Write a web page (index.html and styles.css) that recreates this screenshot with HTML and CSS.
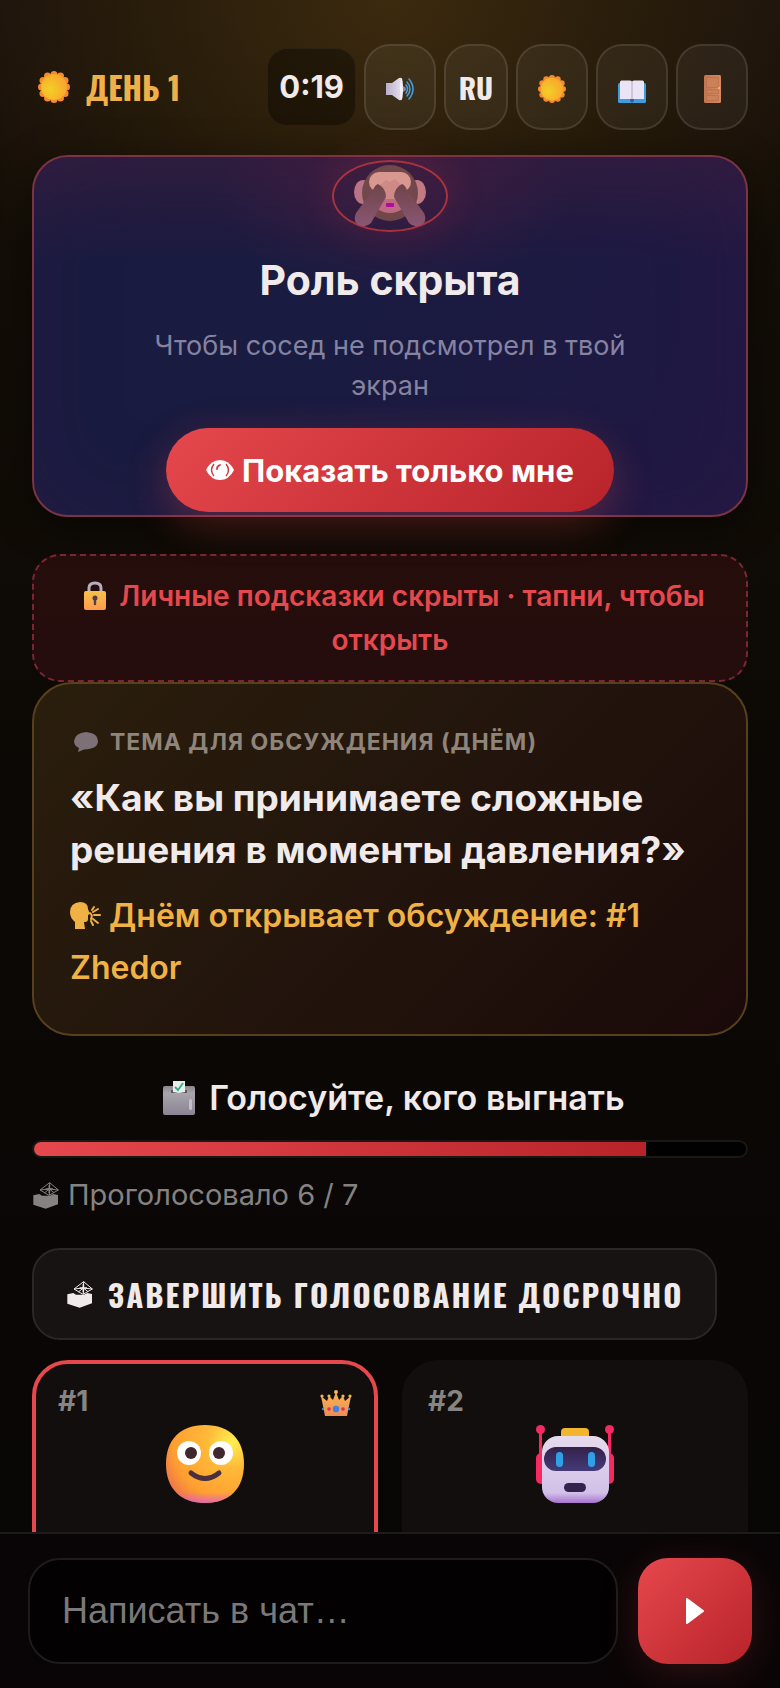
FILE: index.html
```html
<!DOCTYPE html>
<html lang="ru">
<head>
<meta charset="utf-8">
<meta name="viewport" content="width=device-width, initial-scale=1">
<title>День 1</title>
<link rel="stylesheet" href="styles.css">
</head>
<body>
<svg class="defs" aria-hidden="true">
  <defs>
    <radialGradient id="sunCore" cx="35%" cy="60%" r="70%"><stop offset="0" stop-color="#f3d027"/><stop offset="1" stop-color="#f9a32c"/></radialGradient>
    <linearGradient id="speaker" x1="0" x2="1"><stop offset="0" stop-color="#b9aec9"/><stop offset="1" stop-color="#e8e2ee"/></linearGradient>
    <linearGradient id="arm" gradientUnits="userSpaceOnUse" x1="0" y1="20" x2="0" y2="62"><stop offset="0" stop-color="#6f4548"/><stop offset="1" stop-color="#8a5674"/></linearGradient>
    <radialGradient id="furHead" cx="50%" cy="45%" r="55%"><stop offset="0" stop-color="#7a4555"/><stop offset="1" stop-color="#704848"/></radialGradient>
    <linearGradient id="lockBody" x1="0" y1="0" x2="0" y2="1"><stop offset="0" stop-color="#f5c24a"/><stop offset="1" stop-color="#ff9a4e"/></linearGradient>
    <linearGradient id="box" x1="0" y1="0" x2="0" y2="1"><stop offset="0" stop-color="#8a8889"/><stop offset=".25" stop-color="#a9a5ad"/><stop offset="1" stop-color="#8a8494"/></linearGradient>
    <radialGradient id="face" cx="85%" cy="22%" r="95%"><stop offset="0" stop-color="#fff050"/><stop offset=".35" stop-color="#ffb938"/><stop offset=".8" stop-color="#ff9f30"/><stop offset="1" stop-color="#f07a48"/></radialGradient>
    <linearGradient id="faceLow" x1="0" y1="0" x2="0" y2="1"><stop offset=".86" stop-color="#e060c0" stop-opacity="0"/><stop offset="1" stop-color="#e060d0" stop-opacity=".8"/></linearGradient>
    <linearGradient id="robot" x1="0" y1="0" x2="0" y2="1"><stop offset="0" stop-color="#e6dcec"/><stop offset=".85" stop-color="#d2c0e8"/><stop offset="1" stop-color="#a774cf"/></linearGradient>
    <linearGradient id="visor" x1="0" y1="0" x2="0" y2="1"><stop offset="0" stop-color="#33224a"/><stop offset="1" stop-color="#443a78"/></linearGradient>
    <linearGradient id="door" x1="0" x2="1"><stop offset="0" stop-color="#c2764f"/><stop offset="1" stop-color="#d58a61"/></linearGradient>
    <linearGradient id="crown" x1="0" y1="0" x2="0" y2="1"><stop offset="0" stop-color="#f7b552"/><stop offset="1" stop-color="#ee8d55"/></linearGradient>
    <symbol id="sun" viewBox="0 0 32 32">
      <g fill="#f58b2e"><circle cx="16" cy="3.500" r="3.500"/><circle cx="22.500" cy="5" r="3.500"/><circle cx="27" cy="9.500" r="3.500"/><circle cx="28.500" cy="16" r="3.500"/><circle cx="27" cy="22.500" r="3.500"/><circle cx="22.500" cy="27" r="3.500"/><circle cx="16" cy="28.500" r="3.500"/><circle cx="9.500" cy="27" r="3.500"/><circle cx="5" cy="22.500" r="3.500"/><circle cx="3.500" cy="16" r="3.500"/><circle cx="5" cy="9.500" r="3.500"/><circle cx="9.500" cy="5" r="3.500"/></g>
      <circle cx="16" cy="16" r="13" fill="url(#sunCore)"/>
    </symbol>
    <symbol id="ballot" viewBox="40 8 82 84">
      <path fill="currentColor" d="M43 51l18-4 8 5 24 0 10-5 14 3v28L80 91 43 79z"/>
      <path fill="none" stroke="currentColor" stroke-width="3" stroke-linejoin="round" d="M63 35L92 13l26 22-28 16zM63 35l28-3 27 3M92 13l-1 38M76 44l15-12 14 11"/>
      <path stroke="currentColor" stroke-width="5" d="M91 21v24M80 32h22"/>
    </symbol>
  </defs>
</svg>

<main class="game">
  <header class="topbar">
    <h1 class="phase"><svg class="phase-icon" aria-hidden="true"><use href="#sun"/></svg>ДЕНЬ 1</h1>
    <div class="tools">
      <span class="timer">0:19</span>
      <button class="tool" aria-label="Звук"><svg viewBox="0 0 28 28" aria-hidden="true"><path fill="url(#speaker)" d="M0 8h6l7-5q3-1 3 2v18q0 3-3 2l-7-5H0z"/><ellipse cx="15.500" cy="14" rx="1.500" ry="11" fill="#f5f0f7"/><path fill="#8f86a6" d="M17 11q3 1 3 3t-3 3z"/><path fill="none" stroke="#469bd6" stroke-width="1.600" stroke-linecap="round" d="M20 10q3 4 0 8M21 7q6 7 0 14M23 4q8 10 0 20"/></svg></button>
      <button class="tool tool-lang">RU</button>
      <button class="tool" aria-label="Тема"><svg aria-hidden="true"><use href="#sun"/></svg></button>
      <button class="tool" aria-label="Правила"><svg viewBox="0 0 28 28" aria-hidden="true"><rect x="0" y="8" width="28" height="20" rx="1.500" fill="#3f9ee0"/><path fill="#ebe4f5" d="M2 7q0-1.500 1.500-1.500H12q2 0 2 1.500 0-1.500 2-1.500h8.500Q26 5.500 26 7v17H15.500l-1.500 1-1.500-1H2z"/><path stroke="#b7a6c8" d="M14 7v17"/><path fill="#3c5e94" d="M12 24h4v2l-2 2-2-2z"/></svg></button>
      <button class="tool" aria-label="Выйти"><svg viewBox="0 0 28 28" aria-hidden="true"><rect x="6" width="17" height="28" rx="1.500" fill="url(#door)"/><g fill="#cb8058" stroke="#b06d48" stroke-width=".6"><path d="M8.500 2.500h12v10h-12zM8.500 15h12v3.500h-12zM8.500 20.500h12v5h-12z"/></g><circle cx="21" cy="13" r="1" fill="#ffc35b"/></svg></button>
    </div>
  </header>

  <section class="role">
    <span class="role-badge">
      <svg viewBox="0 0 72 64" aria-hidden="true">
        <ellipse cx="9" cy="28" rx="9" ry="12" fill="#b97585"/><ellipse cx="63" cy="28" rx="9" ry="12" fill="#c17a83"/>
        <ellipse cx="36" cy="29" rx="28" ry="28" fill="url(#furHead)"/>
        <ellipse cx="36" cy="35" rx="17" ry="14" fill="#bd6a82"/>
        <rect x="15" y="8" width="42" height="20" rx="10" fill="#d8988f"/>
        <path fill="#cf8a88" d="M24 23l8-7 4 2 5-3 8 8-7 12H30z"/>
        <rect x="32" y="39" width="8" height="4" rx="1" fill="#b00c9c"/>
        <g fill="url(#arm)"><path d="M24 20Q32 24 32 33L17 59Q11 65 3 60-1 56 2 49L19 26Q21 21 24 20z"/><path d="M48 20Q40 24 40 33L55 59Q61 65 69 60 73 56 70 49L53 26Q51 21 48 20z"/></g>
      </svg>
    </span>
    <h2 class="role-title">Роль скрыта</h2>
    <p class="role-text">Чтобы сосед не подсмотрел в твой экран</p>
    <button class="reveal"><svg class="reveal-icon" viewBox="0 0 28 22" aria-hidden="true"><path fill="#fff" d="M0 11Q5 1 14 1t14 10q-5 10-14 10T0 11z"/><path fill="none" stroke="#cf373c" stroke-width="1.400" d="M8 5q-5 6 0 12M20 5q5 6 0 12"/><path fill="none" stroke="#cf373c" stroke-width="1.800" stroke-linecap="round" d="M11 10q0-3 3-4"/></svg>Показать только мне</button>
  </section>

  <button class="hint"><svg class="hint-icon" viewBox="0 0 24 30" aria-hidden="true"><path fill="none" stroke="#b9adba" stroke-width="3" d="M6 12V7q0-5 6-5t6 5v5"/><rect x="1" y="10" width="22" height="19" rx="2" fill="url(#lockBody)"/><circle cx="12" cy="17" r="2.500" fill="#4e4047"/><path stroke="#4e4047" stroke-width="2.400" stroke-linecap="round" d="M12 17v6"/></svg>Личные подсказки скрыты · тапни, чтобы открыть</button>

  <section class="topic">
    <h3 class="topic-label"><svg class="topic-icon" viewBox="0 0 24 20" aria-hidden="true"><path fill="#7d7077" d="M12 0q12 1 12 9 0 8-14 8.500L4 20l1-4Q0 14 0 9 1 1 12 0z"/></svg>ТЕМА ДЛЯ ОБСУЖДЕНИЯ (ДНЁМ)</h3>
    <p class="topic-quote">«Как вы принимаете сложные решения в моменты давления?»</p>
    <p class="topic-opener"><svg class="opener-icon" viewBox="0 0 31 27" aria-hidden="true"><path fill="#f0b145" d="M10 0Q18 0 18 7l2 5-2 1v4q0 3-3 3h-1l1 7H5v-7Q0 16 0 10 0 1 10 0z"/><path fill="none" stroke="#f0b145" stroke-width="2" stroke-linecap="round" d="M20 11q3 2 1 6M23 10l5-3M24 13h6M23 17l5 4M22 8l2-3M21 19l2 4"/></svg> Днём открывает обсуждение: #1 Zhedor</p>
  </section>

  <h2 class="vote-title"><svg class="vote-icon" viewBox="0 0 32 34" aria-hidden="true"><rect y="5" width="32" height="29" rx="2" fill="url(#box)"/><path fill="#5d5a60" d="M8 9h16v3H8z"/><path fill="#e8eeee" d="M10 0h12v11l-6 1-6-1z"/><path fill="none" stroke="#2bb183" stroke-width="1.800" d="M12 6l3 3 5-7"/><rect x="26" y="18" width="3" height="11" rx="1.500" fill="#c4c0c9"/></svg>Голосуйте, кого выгнать</h2>
  <div class="progress" role="progressbar" aria-valuemin="0" aria-valuemax="7" aria-valuenow="6" aria-label="Проголосовало"><span class="progress-fill" style="width:86%"></span></div>
  <p class="voted"><svg class="ballot-icon" aria-hidden="true"><use href="#ballot"/></svg>Проголосовало 6 / 7</p>
  <button class="finish"><svg class="ballot-icon" aria-hidden="true"><use href="#ballot"/></svg>ЗАВЕРШИТЬ ГОЛОСОВАНИЕ ДОСРОЧНО</button>

  <section class="players">
    <article class="player player-me">
      <div class="player-head"><span>#1</span><svg class="crown" viewBox="0 0 32 26" aria-hidden="true"><path fill="url(#crown)" d="M1 6l6 5 2-5 4 4 3-8 3 8 4-4 2 5 6-5-4 20H5z"/><g fill="#f7b552"><circle cx="2" cy="6" r="1.600"/><circle cx="9" cy="6" r="1.600"/><circle cx="16" cy="2" r="2"/><circle cx="23" cy="6" r="1.600"/><circle cx="30" cy="6" r="1.600"/></g><circle cx="16" cy="19" r="3.200" fill="#3d82e6"/><circle cx="9" cy="19" r="1.800" fill="#e62e4c"/><circle cx="23" cy="19" r="1.800" fill="#e62e4c"/><circle cx="3" cy="19" r="1.200" fill="#3d82e6"/><circle cx="29" cy="19" r="1.200" fill="#3d82e6"/></svg></div>
      <svg class="avatar" viewBox="0 0 78 78" aria-hidden="true"><path fill="url(#face)" d="M39 0C64 0 78 15 78 39S64 78 39 78 0 63 0 39 14 0 39 0z"/><path fill="url(#faceLow)" d="M39 0C64 0 78 15 78 39S64 78 39 78 0 63 0 39 14 0 39 0z"/><circle cx="23" cy="28" r="12" fill="#fff"/><circle cx="55" cy="28" r="12" fill="#fff"/><circle cx="25" cy="28" r="6" fill="#40282f"/><circle cx="53" cy="28" r="6" fill="#40282f"/><path fill="none" stroke="#49303c" stroke-width="5" stroke-linecap="round" d="M25 48q14 11 28 0"/></svg>
    </article>
    <article class="player">
      <div class="player-head"><span>#2</span></div>
      <svg class="avatar" viewBox="0 0 78 78" aria-hidden="true"><g fill="#f52a63"><circle cx="4.500" cy="4.500" r="4.500"/><circle cx="73.500" cy="4.500" r="4.500"/><path d="M3 5h3v25H3zM72 5h3v25h-3z"/><rect y="28" width="14" height="31" rx="5"/><rect x="64" y="28" width="14" height="31" rx="5"/></g><rect x="25" y="3" width="28" height="12" rx="4" fill="#f2b52d"/><rect x="6" y="11" width="67" height="67" rx="16" fill="url(#robot)"/><rect x="8" y="22" width="62" height="24" rx="12" fill="url(#visor)"/><rect x="20" y="27" width="7" height="15" rx="3.500" fill="#2fa0e6"/><rect x="52" y="27" width="7" height="15" rx="3.500" fill="#2fa0e6"/><rect x="28" y="58" width="22" height="9" rx="4.500" fill="#33244f"/></svg>
    </article>
  </section>
</main>

<form class="chat">
  <input class="chat-input" type="text" aria-label="Сообщение" placeholder="Написать в чат…">
  <button class="chat-send" type="button" aria-label="Отправить"><svg viewBox="0 0 18 26" aria-hidden="true"><path fill="#fff" stroke="#fff" stroke-width="2" stroke-linejoin="round" d="M1 1l16 12L1 25z"/></svg></button>
</form>
</body>
</html>
```
FILE: styles.css
```css
* { box-sizing: border-box; }

body {
  margin: 0;
  height: 100vh;
  display: flex;
  flex-direction: column;
  overflow: hidden;
  color: #f0eaea;
  font-family: Inter, "Noto Sans", sans-serif;
  background:
    radial-gradient(ellipse 60% 400px at 50% 0, rgba(98, 68, 22, .5), rgba(98, 68, 22, 0)),
    radial-gradient(ellipse 160px 260px at 0 0, rgba(45, 22, 30, .2), transparent),
    radial-gradient(ellipse 160px 260px at 100% 0, rgba(45, 22, 30, .2), transparent),
    linear-gradient(#161007, #0b0805 50%, #080506);
}

h1, h2, h3, p { margin: 0; }
button { font: inherit; color: inherit; cursor: pointer; }
svg { flex: none; }
.defs { position: absolute; width: 0; height: 0; }

.game {
  flex: 1;
  min-height: 0;
  overflow: hidden;
  padding: 44px 32px 0;
}

.topbar {
  display: flex;
  align-items: center;
  justify-content: space-between;
  height: 86px;
  margin-bottom: 25px;
}
.phase {
  display: flex;
  align-items: center;
  gap: 16px;
  padding-left: 6px;
  color: #efb04a;
  font: bold 32px/40px Oswald, "Roboto Condensed", "Open Sans Condensed", Roboto, sans-serif;
}
.phase-icon { width: 32px; height: 32px; }
.tools { display: flex; align-items: center; gap: 8px; }
.timer {
  padding: 0 11px;
  border: 1px solid rgba(255, 255, 255, .05);
  border-radius: 20px;
  background: rgba(0, 0, 0, .35);
  font-size: 31px;
  font-weight: 700;
  line-height: 76px;
}
.tool {
  display: flex;
  align-items: center;
  justify-content: center;
  width: 72px;
  height: 86px;
  padding: 4px 0 0;
  border: 2px solid rgba(255, 255, 255, .1);
  border-radius: 26px;
  background: rgba(255, 255, 255, .05);
}
.tool svg { width: 28px; height: 28px; }
.tool-lang {
  width: 64px;
  padding: 0;
  font: bold 29px/40px Oswald, "Roboto Condensed", "Open Sans Condensed", Roboto, sans-serif;
}

.role {
  display: flex;
  flex-direction: column;
  align-items: center;
  height: 362px;
  padding: 3px 88px 0;
  border: 2px solid #7c3343;
  border-radius: 36px;
  text-align: center;
  background:
    radial-gradient(ellipse 180px 110px at 50% 30px, rgba(140, 35, 70, .25), transparent),
    linear-gradient(rgba(70, 32, 60, .4), transparent 30%),
    linear-gradient(110deg, #191b40 40%, #201844);
  box-shadow: inset 0 0 90px rgba(70, 28, 70, .22), 0 8px 40px rgba(0, 0, 0, .4);
}
.role-badge {
  display: flex;
  align-items: center;
  justify-content: center;
  width: 116px;
  height: 72px;
  border: 2px solid #a8333f;
  border-radius: 50%;
  box-shadow: 0 0 40px rgba(200, 50, 70, .2);
}
.role-badge svg { width: 72px; height: 64px; }
.role-title {
  margin-top: 22px;
  font-size: 41px;
  font-weight: 700;
  line-height: 52px;
}
.role-text {
  margin-top: 20px;
  color: #8583a0;
  font-size: 27px;
  line-height: 40px;
}
.reveal {
  display: flex;
  align-items: center;
  gap: 8px;
  margin-top: 22px;
  padding: 0 40px;
  height: 84px;
  border: 0;
  border-radius: 42px;
  color: #fff;
  font-size: 31px;
  font-weight: 700;
  white-space: nowrap;
  flex: none;
  background: linear-gradient(135deg, #e5484d, #b8232a);
  box-shadow: 0 12px 40px rgba(229, 72, 77, .3);
}
.reveal-icon { width: 28px; height: 22px; }

.hint {
  display: block;
  width: 100%;
  margin-top: 37px;
  padding: 18px 40px;
  border: 2px dashed #7c2635;
  border-radius: 28px;
  color: #e5484d;
  font-size: 28px;
  font-weight: 600;
  line-height: 44px;
  background: rgba(229, 50, 70, .11);
}
.hint-icon { width: 24px; height: 30px; margin: 0 12px 0 8px; vertical-align: -5px; }

.topic {
  padding: 36px 36px 40px;
  border: 2px solid #59401c;
  border-radius: 40px;
  background: linear-gradient(135deg, #2a1e0d, #21130c 60%, #1a0909);
}
.topic-label {
  display: flex;
  align-items: center;
  gap: 12px;
  padding-left: 4px;
  color: #8f857b;
  font-size: 23px;
  font-weight: 700;
  line-height: 44px;
  letter-spacing: 1px;
}
.topic-icon { width: 24px; height: 20px; }
.topic-quote {
  margin-top: 8px;
  font-size: 37px;
  font-weight: 700;
  line-height: 52px;
}
.topic-opener {
  margin-top: 14px;
  color: #f0b145;
  font-size: 32px;
  font-weight: 600;
  line-height: 52px;
}
.opener-icon { width: 31px; height: 27px; vertical-align: -2px; }

.vote-title {
  display: flex;
  align-items: center;
  justify-content: center;
  gap: 14px;
  margin-top: 38px;
  padding-left: 8px;
  font-size: 34px;
  font-weight: 600;
  line-height: 48px;
}
.vote-icon { width: 32px; height: 34px; }
.progress {
  height: 18px;
  margin-top: 18px;
  border: 2px solid #1a1717;
  border-radius: 9px;
  overflow: hidden;
  background: #020101;
}
.progress-fill {
  display: block;
  height: 100%;
  background: linear-gradient(90deg, #e5484d, #b8232a);
}
.ballot-icon { width: 28px; height: 28px; }
.voted {
  display: flex;
  align-items: center;
  gap: 8px;
  margin-top: 16px;
  color: #858282;
  font-size: 29px;
  line-height: 42px;
}
.finish {
  display: flex;
  align-items: center;
  gap: 14px;
  height: 92px;
  margin-top: 32px;
  padding: 0 32px;
  border: 2px solid #2a2727;
  border-radius: 28px;
  background: #161312;
  font: bold 31px/44px Oswald, "Roboto Condensed", "Open Sans Condensed", Roboto, sans-serif;
  letter-spacing: 2px;
  white-space: nowrap;
}

.players {
  display: grid;
  grid-template-columns: 1fr 1fr;
  gap: 24px;
  margin-top: 20px;
}
.player {
  height: 260px;
  padding: 20px 22px;
  border: 4px solid transparent;
  border-radius: 36px;
  background: #110e0d border-box;
}
.player-me { border-color: #e5484d; }
.player-head {
  display: flex;
  justify-content: space-between;
  align-items: center;
  height: 34px;
  color: #878484;
  font-size: 28px;
  font-weight: 700;
}
.crown { width: 32px; height: 26px; margin-top: 4px; }
.avatar { display: block; width: 78px; height: 78px; margin: 7px auto 0; }

.chat {
  display: flex;
  gap: 20px;
  padding: 24px 28px;
  border-top: 2px solid #1e1b1c;
  background: #090506;
}
.chat-input {
  flex: 1;
  min-width: 0;
  height: 106px;
  padding: 0 32px;
  border: 2px solid #1e1b1c;
  border-radius: 32px;
  background: #030102;
  color: #f0eaea;
  font: 36px "Liberation Sans", Arial, sans-serif;
}
.chat-input::placeholder { color: #7b7879; opacity: 1; }
.chat-send {
  display: flex;
  align-items: center;
  justify-content: center;
  width: 114px;
  height: 106px;
  padding: 0;
  border: 0;
  border-radius: 30px;
  background: linear-gradient(135deg, #e5484d, #b8232a);
  box-shadow: 0 8px 40px rgba(229, 72, 77, .18);
}
.chat-send svg { width: 18px; height: 26px; }
```
